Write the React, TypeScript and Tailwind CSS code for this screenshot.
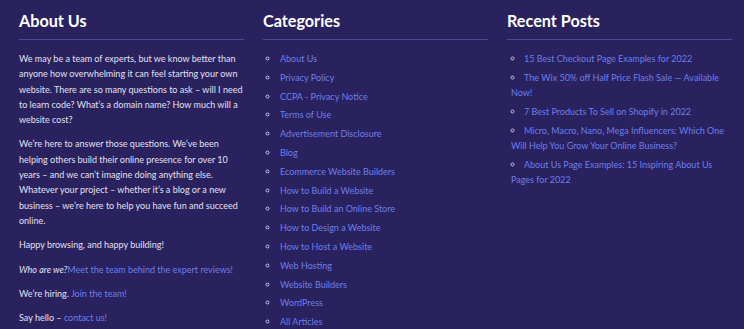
const categories = [
  'About Us',
  'Privacy Policy',
  'CCPA - Privacy Notice',
  'Terms of Use',
  'Advertisement Disclosure',
  'Blog',
  'Ecommerce Website Builders',
  'How to Build a Website',
  'How to Build an Online Store',
  'How to Design a Website',
  'How to Host a Website',
  'Web Hosting',
  'Website Builders',
  'WordPress',
  'All Articles',
];

const posts = [
  '15 Best Checkout Page Examples for 2022',
  'The Wix 50% off Half Price Flash Sale — Available Now!',
  '7 Best Products To Sell on Shopify in 2022',
  'Micro, Macro, Nano, Mega Influencers: Which One Will Help You Grow Your Online Business?',
  'About Us Page Examples: 15 Inspiring About Us Pages for 2022',
];

function Heading({ children }: { children: React.ReactNode }) {
  return (
    <div className="border-b border-[#4d4897] pb-[7px] mb-[11px]">
      <h2 className="text-[16.2px] leading-[22px] font-bold text-white">{children}</h2>
    </div>
  );
}

export default function App() {
  return (
    <footer
      className="w-[744px] h-[329px] overflow-hidden bg-[#29225f] text-[#e2e0f0] text-[9px] leading-[15.3px]"
      style={{ fontFamily: 'Lato, "Open Sans", sans-serif' }}
    >
      <div className="grid grid-cols-3 gap-[19px] pl-[19px] pr-[12px] pt-[10px]">
        <section>
          <Heading>About Us</Heading>
          <div className="flex flex-col gap-[9px]">
            <p>
              We may be a team of experts, but we know better than anyone how overwhelming it can feel starting your own
              website. There are so many questions to ask – will I need to learn code? What’s a domain name? How much will a
              website cost?
            </p>
            <p>
              We’re here to answer those questions. We’ve been helping others build their online presence for over 10
              years – and we can’t imagine doing anything else. Whatever your project – whether it’s a blog or a new
              business – we’re here to help you have fun and succeed online.
            </p>
            <p>Happy browsing, and happy building!</p>
            <p>
              <em>Who are we?</em>
              <a className="text-[#6b7fec]">Meet the team behind the expert reviews!</a>
            </p>
            <p>
              We’re hiring. <a className="text-[#6b7fec]">Join the team!</a>
            </p>
            <p>
              Say hello – <a className="text-[#6b7fec]">contact us!</a>
            </p>
          </div>
        </section>

        <section>
          <Heading>Categories</Heading>
          <ul className="list-[circle] list-inside pl-[3px] flex flex-col gap-[3.5px]">
            {categories.map((c) => (
              <li key={c} className="marker:text-[#c9c6e4]">
                <a className="text-[#6b7fec] pl-[1px]">{c}</a>
              </li>
            ))}
          </ul>
        </section>

        <section>
          <Heading>Recent Posts</Heading>
          <ul className="list-[circle] list-inside pl-[4px] flex flex-col gap-[3.5px]">
            {posts.map((p) => (
              <li key={p} className="marker:text-[#c9c6e4]">
                <a className="text-[#6b7fec]">{p}</a>
              </li>
            ))}
          </ul>
        </section>
      </div>
    </footer>
  );
}
